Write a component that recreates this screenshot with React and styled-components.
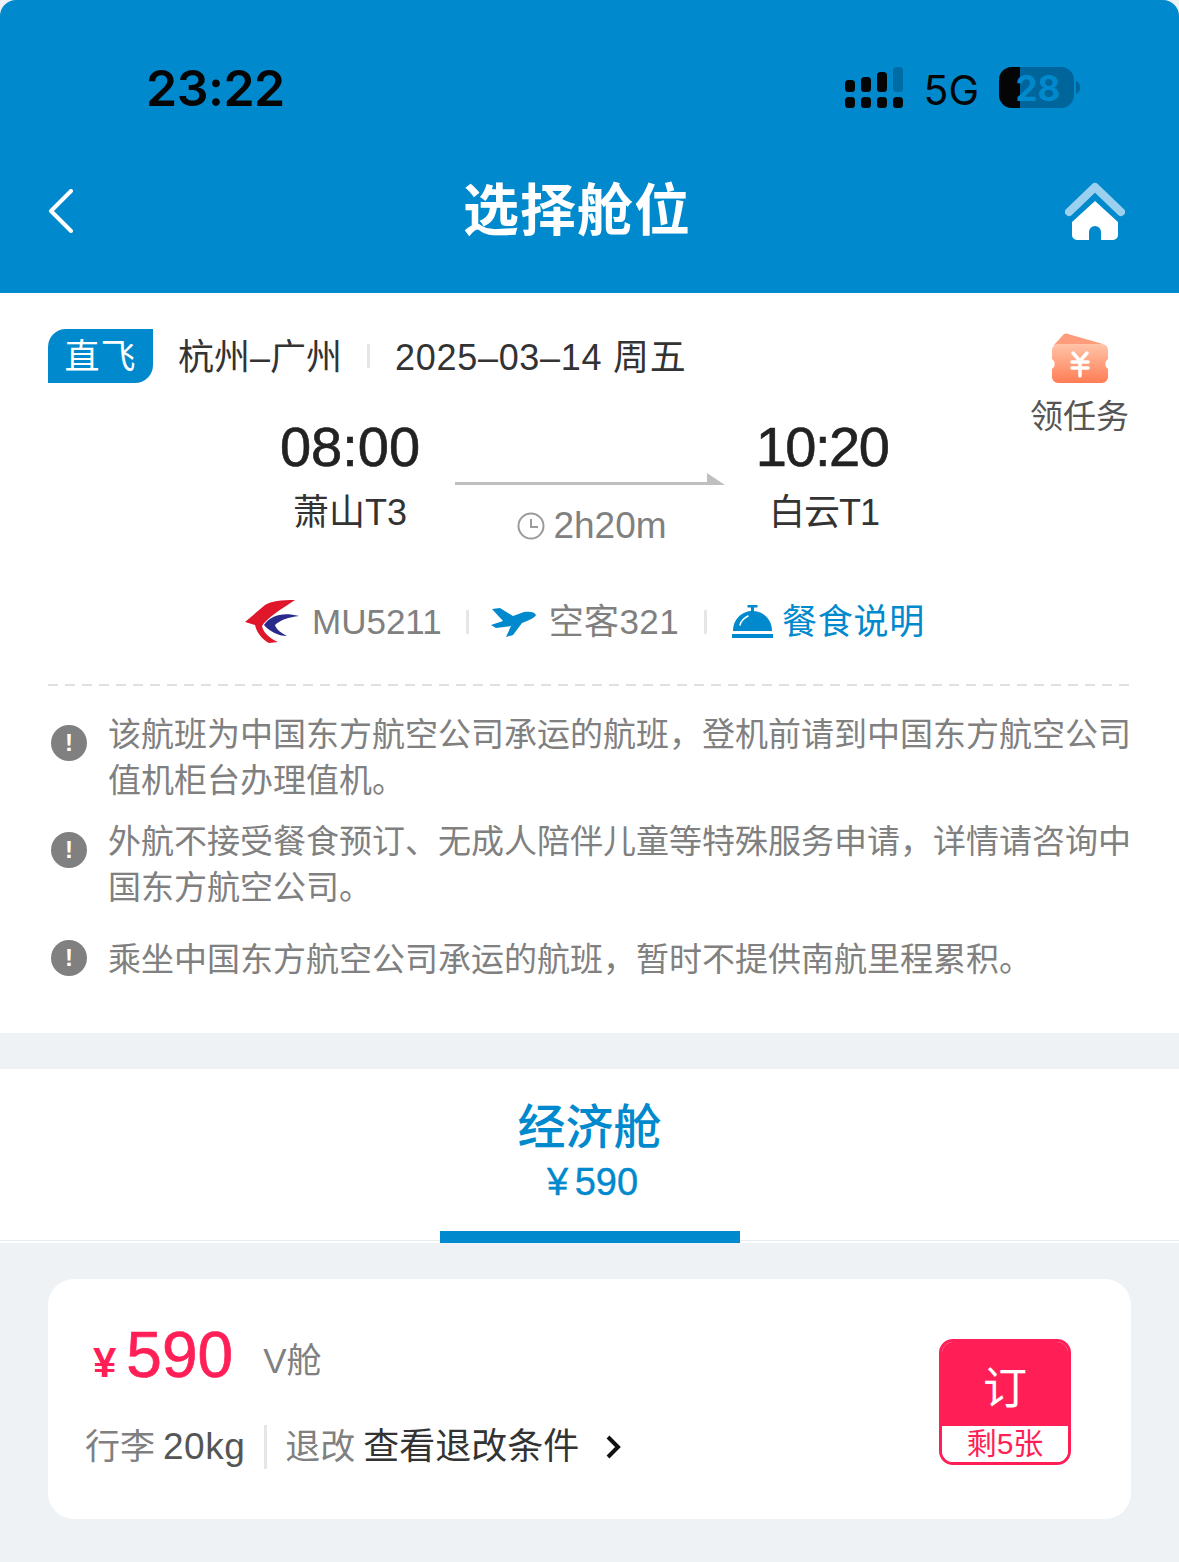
import React from 'react';
import styled, { createGlobalStyle } from 'styled-components';

const BLUE = '#0089cd';
const RED = '#ff1f56';
const CJK = '"Liberation Sans", "Noto Sans CJK SC", sans-serif';

const Global = createGlobalStyle`
  html, body { margin: 0; padding: 0; background: #fff; }
  body { font-family: ${CJK}; }
  * { box-sizing: border-box; }
`;

const Page = styled.div`
  width: 1179px;
  height: 1562px;
  background: #eef2f5;
  overflow: hidden;
`;

const Header = styled.header`
  height: 293px;
  background: ${BLUE};
  border-radius: 16px 16px 0 0;
  display: flex;
  flex-direction: column;
`;

const StatusBar = styled.div`
  height: 152px;
  padding: 60px 98px 0 146px;
  display: flex;
  justify-content: space-between;
  align-items: flex-start;
`;

const Clock = styled.div`
  font-family: Inter, sans-serif;
  font-size: 50px;
  line-height: 56px;
  font-weight: 600;
  letter-spacing: -0.5px;
  color: #050505;
`;

const StatusIcons = styled.div`
  display: flex;
  align-items: center;
  height: 56px;
`;

const NetLabel = styled.span`
  font-family: Inter, sans-serif;
  font-size: 41px;
  line-height: 40px;
  padding-top: 4px;
  color: #050505;
  margin: 0 20px;
`;

const NavBar = styled.div`
  height: 117px;
  padding: 0 54px 0 48px;
  display: flex;
  align-items: center;
  justify-content: space-between;
`;

const NavTitle = styled.h1`
  margin: 0 0 10px 15px;
  font-size: 56px;
  line-height: 64px;
  font-weight: 700;
  color: #fff;
  font-family: "Noto Sans CJK SC", sans-serif;
  letter-spacing: 1px;
`;

const Flight = styled.section`
  height: 740px;
  background: #fff;
  padding: 36px 48px 0;
  position: relative;
`;

const TopRow = styled.div`
  display: flex;
  align-items: center;
  height: 54px;
`;

const DirectTag = styled.span`
  width: 105px;
  height: 54px;
  padding-bottom: 6px;
  background: ${BLUE};
  color: #fff;
  font-size: 35px;
  border-radius: 18px 0 18px 0;
  display: flex;
  align-items: center;
  justify-content: center;
  letter-spacing: 1px;
`;

const RouteText = styled.span`
  font-size: 36px;
  line-height: 48px;
  padding-top: 4px;
  color: #333;
  margin-left: ${p => p.$left || 0}px;
  letter-spacing: ${p => p.$spacing || 0}px;
`;

const Sep = styled.i`
  display: block;
  width: 3px;
  height: ${p => p.$height || 24}px;
  background: #e6e6e6;
  margin: ${p => p.$margin};
`;

const Task = styled.div`
  position: absolute;
  top: 40px;
  right: 50px;
  display: flex;
  flex-direction: column;
  align-items: center;
  gap: 10px;
  font-size: 33px;
  line-height: 40px;
  color: #555;
`;

const TimeRow = styled.div`
  display: grid;
  grid-template-columns: 140px 332px 140px;
  justify-content: start;
  margin: 34px 0 0 232px;
`;

const Stop = styled.div`
  display: flex;
  flex-direction: column;
  align-items: center;
  white-space: nowrap;
`;

const Time = styled.div`
  font-size: 56px;
  line-height: 60px;
  font-weight: 400;
  color: #222;
  -webkit-text-stroke: 0.6px #222;
  letter-spacing: ${p => p.$spacing || 0}px;
`;

const Terminal = styled.div`
  font-size: 36px;
  line-height: 44px;
  color: #333;
  margin: 14px 0 0 ${p => p.$left || 0}px;
  letter-spacing: ${p => p.$spacing || 0}px;
`;

const Duration = styled.div`
  display: flex;
  flex-direction: column;
  align-items: center;
  padding: 56px 27px 0 35px;
`;

const DurationText = styled.div`
  display: flex;
  align-items: center;
  gap: 8px;
  font-size: 37px;
  line-height: 44px;
  color: #808080;
  margin: 17px 0 0 4px;
`;

const MetaRow = styled.div`
  display: flex;
  align-items: center;
  height: 50px;
  margin: 49px 0 0 197px;
  font-size: 35px;
  line-height: 50px;
  color: #808080;
`;

const MetaText = styled.span`
  margin-left: 13px;
  letter-spacing: ${p => p.$spacing || 0}px;
`;

const MealLink = styled.span`
  color: ${BLUE};
  margin-left: 9px;
  letter-spacing: 0.7px;
`;

const Dashed = styled.div`
  margin-top: 37px;
  height: 2px;
  background: repeating-linear-gradient(90deg, #e0e0e0 0 10px, transparent 10px 17px);
`;

const Notices = styled.div`
  display: flex;
  flex-direction: column;
  margin-top: 26px;
`;

const Notice = styled.div`
  display: flex;
  align-items: flex-start;
  gap: 21px;
  padding-left: 3px;
  margin-bottom: ${p => p.$gap}px;
`;

const NoticeText = styled.p`
  margin: 0;
  font-size: 33px;
  line-height: 46px;
  color: #808080;
  white-space: nowrap;
`;

const NoticeDot = styled.span`
  flex: none;
  width: 36px;
  height: 36px;
  margin-top: ${p => p.$top}px;
  border-radius: 50%;
  background: #808080;
  color: #fff;
  font-size: 24px;
  font-weight: 700;
  display: flex;
  align-items: center;
  justify-content: center;
`;

const Tabs = styled.div`
  margin-top: 36px;
  height: 174px;
  background: #fff;
  border-bottom: 2px solid #fff;
  box-shadow: inset 0 -1px #e8ecef;
  position: relative;
  display: flex;
  flex-direction: column;
  align-items: center;
  color: ${BLUE};
`;

const TabName = styled.div`
  font-size: 48px;
  line-height: 56px;
  font-weight: 500;
  margin-top: 26px;
  font-family: "Noto Sans CJK SC", sans-serif;
`;

const TabPrice = styled.div`
  font-size: 38px;
  line-height: 44px;
  margin: 9px 0 0 6px;
  word-spacing: -4px;
  -webkit-text-stroke: 0.4px ${BLUE};
`;

const TabBar = styled.div`
  position: absolute;
  left: 440px;
  bottom: -2px;
  width: 300px;
  height: 12px;
  background: ${BLUE};
`;

const Fare = styled.div`
  margin: 36px 48px 0;
  height: 240px;
  background: #fff;
  border-radius: 26px;
  display: flex;
  justify-content: space-between;
  padding: 39px 60px 0 37px;
`;

const FareInfo = styled.div`
  display: flex;
  flex-direction: column;
`;

const PriceRow = styled.div`
  display: flex;
  align-items: baseline;
  height: 66px;
  padding-left: 8px;
`;

const Yen = styled.span`
  font-size: 42px;
  color: ${RED};
  font-weight: 700;
  margin-right: 10px;
`;

const Amount = styled.span`
  font-size: 64px;
  color: ${RED};
  -webkit-text-stroke: 0.7px ${RED};
`;

const Cabin = styled.span`
  font-size: 35px;
  color: #808080;
  margin-left: 30px;
  position: relative;
  top: -4px;
`;

const RuleRow = styled.div`
  display: flex;
  align-items: center;
  margin-top: 41px;
  height: 44px;
  font-size: 35px;
  line-height: 44px;
  color: #808080;
  white-space: nowrap;
`;

const Weight = styled.span`
  font-size: 37px;
  letter-spacing: 0.5px;
  color: #555;
  margin-left: 8px;
`;

const RuleLink = styled.span`
  font-size: 36px;
  color: #333;
  margin-left: 8px;
`;

const Book = styled.div`
  width: 132px;
  height: 126px;
  margin-top: 21px;
  border: 3px solid ${RED};
  border-radius: 14px;
  overflow: hidden;
  display: flex;
  flex-direction: column;
`;

const BookTop = styled.div`
  flex: none;
  height: 84px;
  padding-top: 2px;
  background: ${RED};
  color: #fff;
  font-size: 44px;
  display: flex;
  align-items: center;
  justify-content: center;
`;

const BookLeft = styled.div`
  flex: 1;
  background: #fff;
  color: ${RED};
  font-size: 30px;
  line-height: 36px;
  display: flex;
  align-items: center;
  justify-content: center;
`;

const Cellular = () => (
  <svg width="58" height="42" viewBox="0 0 58 42" style={{ display: 'block' }}>
    <g fill="#050505">
      <rect x="0" y="13" width="10" height="12" rx="3.5" />
      <rect x="16" y="10" width="10" height="15" rx="3.5" />
      <rect x="32" y="5" width="10" height="20" rx="3.5" />
      <rect x="0" y="30" width="10" height="11" rx="3.5" />
      <rect x="16" y="30" width="10" height="11" rx="3.5" />
      <rect x="32" y="30" width="10" height="11" rx="3.5" />
      <rect x="48" y="30" width="10" height="11" rx="3.5" />
    </g>
    <rect x="48" y="0" width="10" height="25" rx="3.5" fill="#006ca6" />
  </svg>
);

const Battery = () => (
  <svg width="82" height="42" viewBox="0 0 82 42" style={{ display: 'block' }}>
    <rect x="0" y="0" width="75" height="41" rx="13" fill="#00659b" />
    <path d="M13 0H21V41H13A13 13 0 0 1 0 28V13A13 13 0 0 1 13 0Z" fill="#050505" />
    <path d="M77 14C80 15 81 18 81 20.5C81 23 80 26 77 27Z" fill="#00659b" />
    <text x="39" y="34" textAnchor="middle" fontFamily="Inter, sans-serif" fontSize="35" fontWeight="700" fill="#0089cd">28</text>
  </svg>
);

const BackIcon = () => (
  <svg width="26" height="44" viewBox="0 0 26 44">
    <path d="M23 2 3 22l20 20" fill="none" stroke="#fff" strokeWidth="4" strokeLinecap="round" strokeLinejoin="round" />
  </svg>
);

const HomeIcon = () => (
  <svg width="60" height="60" viewBox="0 0 60 60">
    <path d="M4 31 30 6l26 25" fill="none" stroke="#9bd1ee" strokeWidth="8" strokeLinecap="round" strokeLinejoin="round" />
    <path d="M30 20 7 41v13a5 5 0 0 0 5 5h12v-8a6 6 0 0 1 12 0v8h12a5 5 0 0 0 5-5V41Z" fill="#fff" />
  </svg>
);

const TicketIcon = () => (
  <svg width="58" height="54" viewBox="0 0 58 54">
    <defs>
      <linearGradient id="tk" x1="0" y1="0" x2="0" y2="1">
        <stop offset="0" stopColor="#ffc4a8" />
        <stop offset="1" stopColor="#ff7d55" />
      </linearGradient>
    </defs>
    <path d="M3 12 12 2c1-1 3-2 5-1l35 10Z" fill="#ff9c7c" />
    <path d="M7 11h44a6 6 0 0 1 6 6v9a6 6 0 0 0 0 10v8a6 6 0 0 1-6 6H7a6 6 0 0 1-6-6v-8a6 6 0 0 0 0-10v-9a6 6 0 0 1 6-6Z" fill="url(#tk)" />
    <path d="M22 20l7 8 7-8M29 28v15M21 29h16M21 35h16" fill="none" stroke="#fff" strokeWidth="3.500" strokeLinecap="round" strokeLinejoin="round" />
  </svg>
);

const ClockIcon = () => (
  <svg width="28" height="28" viewBox="0 0 28 28">
    <circle cx="14" cy="14" r="12.500" fill="none" stroke="#9b9b9b" strokeWidth="2" />
    <path d="M14 7v8h7" fill="none" stroke="#9b9b9b" strokeWidth="2" />
  </svg>
);

const Arrow = () => (
  <svg width="270" height="14" viewBox="0 0 270 14" style={{ display: 'block' }}>
    <path d="M0 9h252V0l18 12H0Z" fill="#bfbfbf" />
  </svg>
);

const AirlineLogo = () => (
  <svg width="54" height="44" viewBox="0 0 54 44">
    <path d="M50 0C36 0 26 1 20 5L0 22l10 3c2 8 7 14 14 18l9-1C24 38 18 32 17 26 21 19 36 9 50 0Z" fill="#e0162b" />
    <path d="M54 16C38 12 26 15 19 25c5 6 14 11 23 11-6-3-11-7-12-11 5-5 14-8 24-9Z" fill="#2a2a8c" />
  </svg>
);

const PlaneIcon = () => (
  <svg width="45" height="32" viewBox="0 0 45 32">
    <path d="M1 3l8-1 13 8 11-4c6-1 11 0 12 3-1 3-7 5-14 8L22 29l-7 2 5-11-15 2-5-3 12-4Z" fill="#0089cd" />
  </svg>
);

const BellIcon = () => (
  <svg width="41" height="34" viewBox="0 0 41 34">
    <path d="M15.500 1h10M20.500 1v6" stroke="#0089cd" strokeWidth="3" fill="none" />
    <path d="M1 26C1 14 10 6 20.500 6S40 14 40 26Z" fill="#0089cd" />
    <path d="M8 20c1-4 4-7 8-9" stroke="#fff" strokeWidth="1.500" fill="none" strokeLinecap="round" />
    <rect x="0" y="29" width="41" height="4" fill="#0089cd" />
  </svg>
);

const Chevron = () => (
  <svg width="16" height="24" viewBox="0 0 16 24" style={{ marginLeft: 26 }}>
    <path d="M3 2l10 10L3 22" fill="none" stroke="#111" strokeWidth="4" />
  </svg>
);

const notices = [
  { gap: 15, dot: 13, text: <>该航班为中国东方航空公司承运的航班，登机前请到中国东方航空公司<br />值机柜台办理值机。</> },
  { gap: 26, dot: 13, text: <>外航不接受餐食预订、无成人陪伴儿童等特殊服务申请，详情请咨询中<br />国东方航空公司。</> },
  { gap: 0, dot: 3, text: '乘坐中国东方航空公司承运的航班，暂时不提供南航里程累积。' },
];

export default function App() {
  return (
    <Page>
      <Global />
      <Header>
        <StatusBar>
          <Clock>23:22</Clock>
          <StatusIcons>
            <Cellular />
            <NetLabel>5G</NetLabel>
            <Battery />
          </StatusIcons>
        </StatusBar>
        <NavBar>
          <BackIcon />
          <NavTitle>选择舱位</NavTitle>
          <HomeIcon />
        </NavBar>
      </Header>

      <Flight>
        <TopRow>
          <DirectTag>直飞</DirectTag>
          <RouteText $left={25}>杭州–广州</RouteText>
          <Sep $margin="0 25px" />
          <RouteText $spacing={0.7}>2025–03–14 周五</RouteText>
        </TopRow>
        <Task>
          <TicketIcon />
          领任务
        </Task>
        <TimeRow>
          <Stop>
            <Time>08:00</Time>
            <Terminal>萧山T3</Terminal>
          </Stop>
          <Duration>
            <Arrow />
            <DurationText>
              <ClockIcon />
              2h20m
            </DurationText>
          </Duration>
          <Stop>
            <Time $spacing={-1.5}>10:20</Time>
            <Terminal $left={4} $spacing={-1}>白云T1</Terminal>
          </Stop>
        </TimeRow>
        <MetaRow>
          <AirlineLogo />
          <MetaText>MU5211</MetaText>
          <Sep $margin="0 22px 0 24px" />
          <PlaneIcon />
          <MetaText $spacing={0.4}>空客321</MetaText>
          <Sep $margin="0 25px 0 25px" />
          <BellIcon />
          <MealLink>餐食说明</MealLink>
        </MetaRow>
        <Dashed />
        <Notices>
          {notices.map((n, i) => (
            <Notice key={i} $gap={n.gap}>
              <NoticeDot $top={n.dot}>!</NoticeDot>
              <NoticeText>{n.text}</NoticeText>
            </Notice>
          ))}
        </Notices>
      </Flight>

      <Tabs>
        <TabName>经济舱</TabName>
        <TabPrice>¥ 590</TabPrice>
        <TabBar />
      </Tabs>

      <Fare>
        <FareInfo>
          <PriceRow>
            <Yen>¥</Yen>
            <Amount>590</Amount>
            <Cabin>V舱</Cabin>
          </PriceRow>
          <RuleRow>
            行李
            <Weight>20kg</Weight>
            <Sep $margin="0 18px 0 19px" $height={44} />
            退改
            <RuleLink>查看退改条件</RuleLink>
            <Chevron />
          </RuleRow>
        </FareInfo>
        <Book>
          <BookTop>订</BookTop>
          <BookLeft>剩5张</BookLeft>
        </Book>
      </Fare>
    </Page>
  );
}
